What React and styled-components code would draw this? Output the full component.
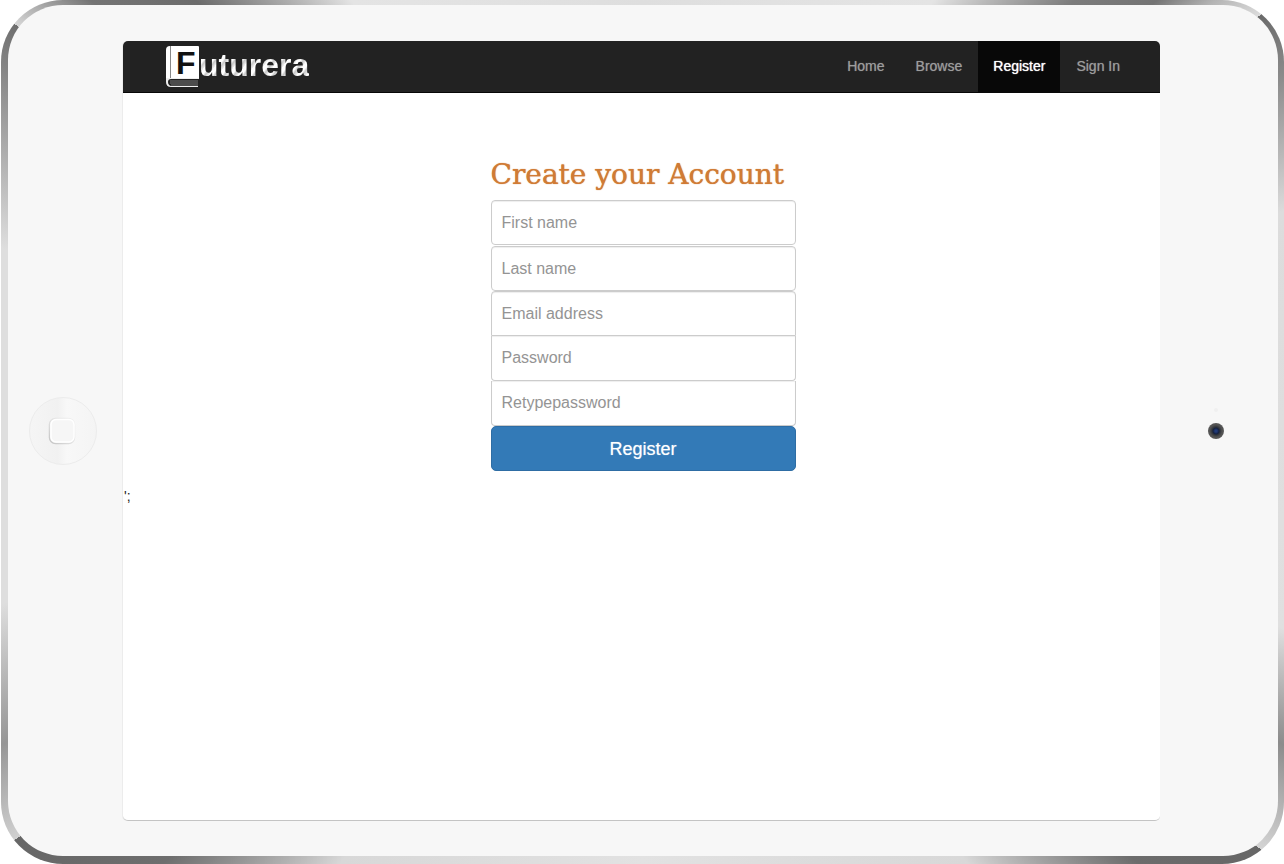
import React from "react";
import styled, { createGlobalStyle } from "styled-components";

const GlobalStyle = createGlobalStyle`
  *, *::before, *::after { box-sizing: border-box; }
  body {
    margin: 0;
    background: #fff;
    color: #333;
    font: 14px/20px "Liberation Sans", Arial, sans-serif;
  }
`;

const Device = styled.div`
  display: flex;
  min-height: 100vh;
  margin-left: 1px;
  padding: 5px 6px 8px 7px;
  border-radius: 62px;
  background: conic-gradient(
    #dedede 0deg,
    #e4e4e4 34deg,
    #7c7c7c 45deg,
    #747474 50deg,
    #b4b4b4 53deg,
    #dcdcdc 56deg,
    #6a6a6a 56deg,
    #8c8c8c 61deg,
    #dcdcdc 71deg,
    #e0e0e0 107deg,
    #8c8c8c 116deg,
    #b0b0b0 120deg,
    #d4d4d4 124deg,
    #666 124deg,
    #6c6c6c 131deg,
    #d8d8d8 143deg,
    #e2e2e2 180deg,
    #d8d8d8 215deg,
    #6e6e6e 228deg,
    #666 237deg,
    #d0d0d0 237deg,
    #969696 244deg,
    #dedede 255deg,
    #dedede 286deg,
    #989898 297deg,
    #6e6e6e 303deg,
    #d6d6d6 303deg,
    #747474 308deg,
    #6c6c6c 314deg,
    #e4e4e4 326deg,
    #dedede 360deg
  );
`;

const Bezel = styled.div`
  flex: 1;
  display: grid;
  grid-template-columns: 115px 1fr 118px;
  padding: 36px 0 35px;
  border-radius: 55px;
  background: #f7f7f7;
`;

const HomeSide = styled.div`
  display: flex;
  align-items: center;
  padding-left: 21px;
`;

const HomeButton = styled.button`
  display: grid;
  place-items: center;
  width: 68px;
  height: 68px;
  padding: 0 2px 0 0;
  border: 1px solid #ececec;
  border-radius: 50%;
  background: linear-gradient(90deg, #f5f5f5 0%, #f1f1f1 42%, #f8f8f8 56%, #f4f4f4 100%);
`;

const CameraSide = styled.div`
  display: flex;
  flex-direction: column;
  align-items: center;
  justify-content: center;
  gap: 11px;
  padding: 0 6px 15px 0;
`;

const Sensor = styled.span`
  width: 4px;
  height: 4px;
  border-radius: 50%;
  background: #f0f0f0;
`;

const Camera = styled.span`
  width: 16px;
  height: 16px;
  border-radius: 50%;
  background: radial-gradient(circle, #203a78 0 1px, #16213f 3px, #30343a 4px, #505050 6px, #5a5a5a 8px);
`;

const Screen = styled.div`
  display: flex;
  flex-direction: column;
  border-bottom: 1px solid #c4c4c4;
  border-radius: 5px;
  background: #fff;
  box-shadow: -1px 0 #ececec;
  overflow: hidden;
`;

const Navbar = styled.header`
  display: flex;
  align-items: stretch;
  justify-content: space-between;
  height: 52px;
  padding: 0 25px 0 43px;
  border-bottom: 1px solid #080808;
  background: #222;
`;

const Brand = styled.a`
  display: flex;
  align-items: center;
  color: #eee;
  font-size: 32px;
  font-weight: 700;
  line-height: 40px;
  text-decoration: none;
`;

const Book = styled.span`
  display: grid;
  grid-template-rows: 32px 9px;
  width: 33px;
`;

const Cover = styled.span`
  padding-left: 10px;
  border-radius: 4px 1px 0 0;
  background: linear-gradient(90deg, #fff 4px, #888 4px 5px, #fff 5px);
  color: #111;
  line-height: 34px;
`;

const BrandName = styled.span`
  padding-bottom: 3px;
  background: repeating-linear-gradient(125deg, #fff 0 3px, #c8c8c8 5px, #f2f2f2 8px);
  background-clip: text;
  color: transparent;
  line-height: 36px;
`;

const Menu = styled.nav`
  display: flex;
  gap: 1px;
`;

const MenuLink = styled.a`
  display: flex;
  align-items: center;
  padding: 0 15px 2px;
  background: ${(p) => (p.$active ? "#080808" : "transparent")};
  color: ${(p) => (p.$active ? "#fff" : "#9d9d9d")};
  text-shadow: 0 0 1px ${(p) => (p.$active ? "#fff" : "#777")};
  text-decoration: none;
`;

const Content = styled.main`
  flex: 1;
  display: flex;
  flex-direction: column;
  padding-top: 62px;
`;

const Form = styled.form`
  display: flex;
  flex-direction: column;
  width: 308px;
  max-width: 100%;
  margin: 0 auto;
  padding-left: 3px;
`;

const Title = styled.h1`
  margin: 0 0 5px;
  color: #d07b35;
  font: 400 28px/40px "DejaVu Serif", serif;
  text-shadow: 0 0 1px #d07b35;
  white-space: nowrap;
`;

const Field = styled.input`
  height: 45px;
  margin: 0 0 ${(p) => (p.$spaced ? "1px" : "0")};
  padding: 0 10px;
  border: 1px solid #ccc;
  border-top-width: ${(p) => (p.$joined ? "0" : "1px")};
  border-radius: ${(p) => p.$corners || "4px"};
  background: #fff;
  color: #555;
  font: 16px/24px "Liberation Sans", Arial, sans-serif;
  box-shadow: inset 0 1px 1px rgba(0, 0, 0, 0.07);

  &::placeholder {
    color: #949494;
    opacity: 1;
  }
`;

const Submit = styled.button`
  height: 45px;
  border: 1px solid #2e6da4;
  border-radius: 5px;
  background: #337ab7;
  color: #fff;
  font: 18px/24px "Liberation Sans", Arial, sans-serif;
  text-shadow: 0 0 1px rgba(255, 255, 255, 0.6);
`;

const Trailing = styled.p`
  margin: 15px 0 0;
  padding-left: 1px;
  color: #222;
`;

const fields = [
  { name: "first", label: "First name", type: "text", spaced: true },
  { name: "last", label: "Last name", type: "text" },
  { name: "email", label: "Email address", type: "email", corners: "4px 4px 0 0" },
  { name: "password", label: "Password", type: "password", joined: true, corners: "0 0 4px 4px" },
  { name: "retype", label: "Retypepassword", type: "password", joined: true, corners: "0 0 4px 4px" },
];

const links = ["Home", "Browse", "Register", "Sign In"];

export default function App() {
  return (
    <>
      <GlobalStyle />
      <Device>
        <Bezel>
          <HomeSide>
            <HomeButton type="button" aria-label="Home button">
              <svg width="28" height="28" viewBox="0 0 28 28" fill="none">
                <defs>
                  <linearGradient id="rim" x1="0" y1="1" x2="1" y2="0">
                    <stop offset="0" stopColor="#c4c4c4" />
                    <stop offset="0.5" stopColor="#e2e2e2" />
                    <stop offset="1" stopColor="#f0f0f0" />
                  </linearGradient>
                </defs>
                <rect x="1.5" y="1.5" width="25" height="25" rx="6" fill="#f6f6f6" stroke="url(#rim)" strokeWidth="1.5" />
                <rect x="3" y="2.5" width="23" height="22.5" rx="5" stroke="#fff" strokeWidth="1.5" />
              </svg>
            </HomeButton>
          </HomeSide>
          <Screen>
            <Navbar>
              <Brand href="#">
                <Book>
                  <Cover>F</Cover>
                  <svg width="33" height="9" viewBox="0 0 33 9" fill="none">
                    <path d="M0 0H33V1H5Q2 1 2 4T5 8H32V9H5Q0 9 0 4Z" fill="#eee" />
                    <path d="M4 3H32M4 5H32M5 7H32" stroke="#777" />
                  </svg>
                </Book>
                <BrandName>uturera</BrandName>
              </Brand>
              <Menu>
                {links.map((text) => (
                  <MenuLink key={text} href="#" $active={text === "Register"}>
                    {text}
                  </MenuLink>
                ))}
              </Menu>
            </Navbar>
            <Content>
              <Form>
                <Title>Create your Account</Title>
                {fields.map((f) => (
                  <Field
                    key={f.name}
                    name={f.name}
                    type={f.type}
                    placeholder={f.label}
                    aria-label={f.label}
                    $spaced={f.spaced}
                    $joined={f.joined}
                    $corners={f.corners}
                  />
                ))}
                <Submit type="submit">Register</Submit>
              </Form>
              <Trailing>';</Trailing>
            </Content>
          </Screen>
          <CameraSide>
            <Sensor />
            <Camera />
          </CameraSide>
        </Bezel>
      </Device>
    </>
  );
}
